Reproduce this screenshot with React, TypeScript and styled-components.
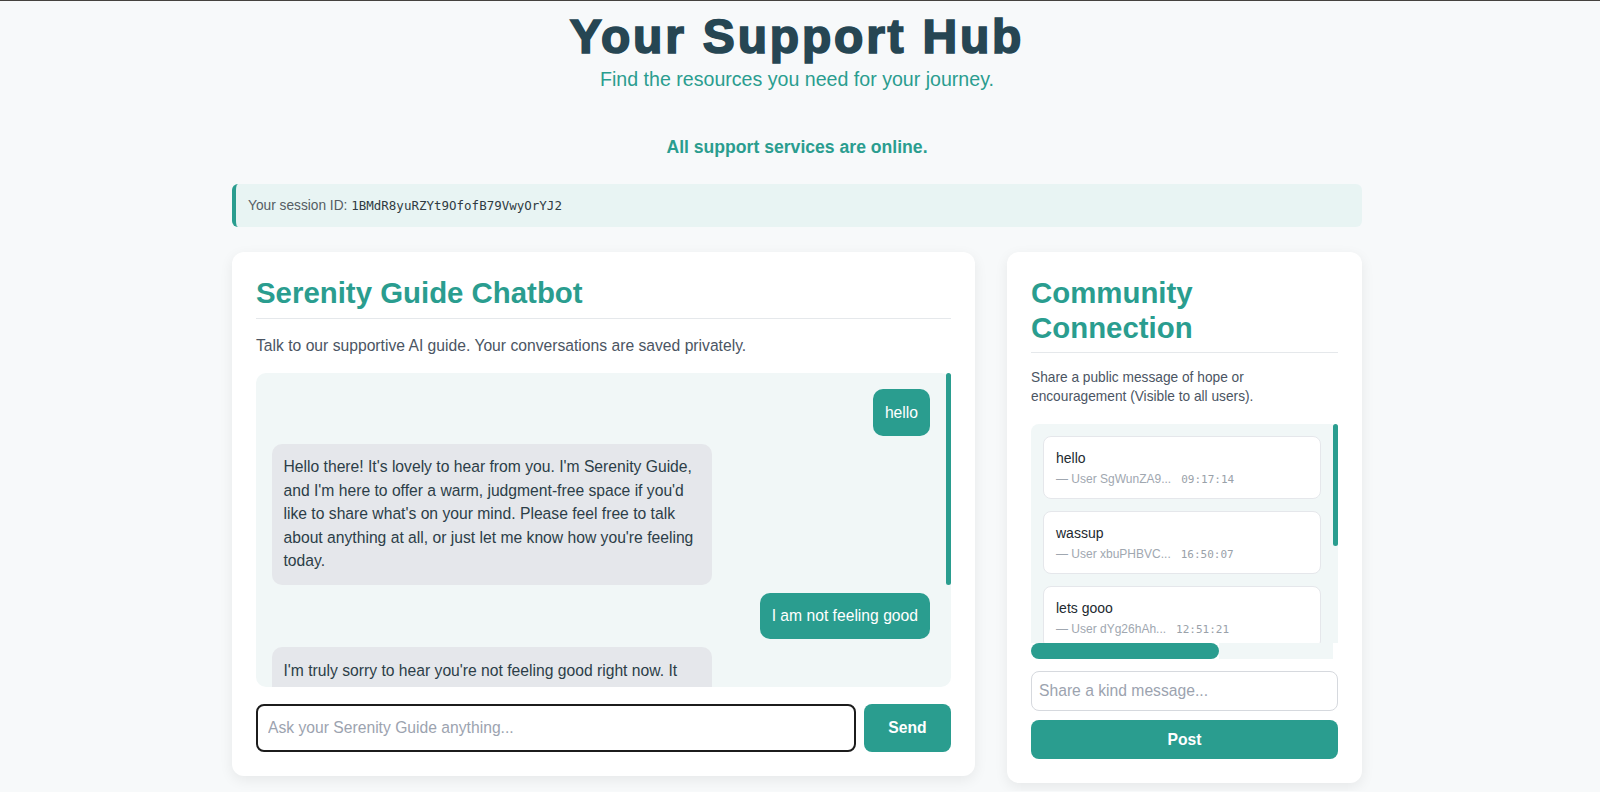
import React from 'react';
import styled, { createGlobalStyle } from 'styled-components';

type ChatMessage = {
  from: 'user' | 'bot';
  text: string;
};

type CommunityPost = {
  text: string;
  user: string;
  time: string;
};

const chatMessages: ChatMessage[] = [
  { from: 'user', text: 'hello' },
  {
    from: 'bot',
    text: "Hello there! It's lovely to hear from you. I'm Serenity Guide, and I'm here to offer a warm, judgment-free space if you'd like to share what's on your mind. Please feel free to talk about anything at all, or just let me know how you're feeling today.",
  },
  { from: 'user', text: 'I am not feeling good' },
  {
    from: 'bot',
    text: "I'm truly sorry to hear you're not feeling good right now. It takes courage to share that, and I'm really glad you reached out. Would you like to tell me a little more about what's been weighing on you? Whether it's something specific or just a general heaviness, I'm here to listen, at whatever pace feels right for you.",
  },
];

const communityPosts: CommunityPost[] = [
  { text: 'hello', user: 'SgWunZA9...', time: '09:17:14' },
  { text: 'wassup', user: 'xbuPHBVC...', time: '16:50:07' },
  { text: 'lets gooo', user: 'dYg26hAh...', time: '12:51:21' },
  { text: 'you are not alone, keep going', user: 'Qm4TfL2x...', time: '18:04:39' },
  { text: 'sending love to everyone here', user: 'Kp8sWvN1...', time: '21:33:02' },
];

const App: React.FC = () => (
  <>
    <GlobalStyle />
    <StyledPage>
      <StyledHeader>
        <StyledTitle>Your Support Hub</StyledTitle>
        <StyledSubtitle>Find the resources you need for your journey.</StyledSubtitle>
      </StyledHeader>

      <StyledStatus>All support services are online.</StyledStatus>

      <StyledSession>
        Your session ID: <StyledSessionId>1BMdR8yuRZYt9OfofB79VwyOrYJ2</StyledSessionId>
      </StyledSession>

      <StyledGrid>
        <StyledCard>
          <StyledCardTitle>Serenity Guide Chatbot</StyledCardTitle>
          <StyledCardText $size={15.68}>
            Talk to our supportive AI guide. Your conversations are saved privately.
          </StyledCardText>
          <StyledScrollFrame>
            <StyledChatWindow>
              {chatMessages.map((message, index) => (
                <StyledBubble key={index} $from={message.from}>
                  {message.text}
                </StyledBubble>
              ))}
            </StyledChatWindow>
            <StyledVThumb $length={212} />
          </StyledScrollFrame>
          <StyledInputRow>
            <StyledChatInput placeholder="Ask your Serenity Guide anything..." />
            <StyledSendButton>Send</StyledSendButton>
          </StyledInputRow>
        </StyledCard>

        <StyledCard>
          <StyledCardTitle>Community Connection</StyledCardTitle>
          <StyledCardText $size={13.72}>
            Share a public message of hope or encouragement (Visible to all users).
          </StyledCardText>
          <StyledScrollFrame>
            <StyledFeed>
              {communityPosts.map((post, index) => (
                <StyledPost key={index}>
                  <StyledPostText>{post.text}</StyledPostText>
                  <StyledPostMeta>
                    — User {post.user}
                    <StyledPostTime>{post.time}</StyledPostTime>
                  </StyledPostMeta>
                </StyledPost>
              ))}
            </StyledFeed>
            <StyledVThumb $length={122} />
            <StyledHScrollbar>
              <StyledHThumb />
              <StyledHTrack />
              <StyledCorner />
            </StyledHScrollbar>
          </StyledScrollFrame>
          <StyledPostInput placeholder="Share a kind message..." />
          <StyledPostButton>Post</StyledPostButton>
        </StyledCard>
      </StyledGrid>
    </StyledPage>
  </>
);

const GlobalStyle = createGlobalStyle`
  html, body {
    margin: 0;
    padding: 0;
  }
  body {
    background: #f7f9fa;
    border-top: 1px solid #45423f;
    font-family: 'Liberation Sans', Arial, sans-serif;
    overflow: hidden;
  }
  input, button {
    font-family: inherit;
  }
`;

const StyledPage = styled.div`
  width: 1130px;
  margin: 0 auto;
  padding: 8px 6px 8px 0;
`;

const StyledHeader = styled.header`
  text-align: center;
`;

const StyledTitle = styled.h1`
  margin: 0 0 4px;
  font-size: 48px;
  line-height: 55px;
  font-weight: 700;
  letter-spacing: 2.8px;
  color: #264653;
  -webkit-text-stroke: 1.7px #264653;
`;

const StyledSubtitle = styled.p`
  margin: 0;
  font-size: 19.6px;
  line-height: 22px;
  color: #2a9d8f;
`;

const StyledStatus = styled.p`
  margin: 47px 0 0;
  text-align: center;
  font-size: 17.6px;
  line-height: 20px;
  font-weight: 700;
  color: #2a9d8f;
`;

const StyledSession = styled.div`
  margin-top: 27px;
  padding: 12px 14px 12px 12px;
  background: #e8f4f3;
  border-left: 4px solid #2a9d8f;
  border-radius: 6px;
  font-size: 13.72px;
  line-height: 19px;
  color: #555d63;
`;

const StyledSessionId = styled.code`
  font-family: 'DejaVu Sans Mono', 'Liberation Mono', monospace;
  font-size: 12.5px;
  color: #2f3b42;
`;

const StyledGrid = styled.main`
  display: grid;
  grid-template-columns: 743px 355px;
  gap: 32px;
  align-items: start;
  margin-top: 25px;
`;

const StyledCard = styled.section`
  background: #ffffff;
  border-radius: 12px;
  padding: 24px;
  box-shadow: 0 4px 14px rgba(0, 0, 0, 0.07);
`;

const StyledCardTitle = styled.h2`
  margin: 0;
  padding-bottom: 7px;
  border-bottom: 1px solid #e5e8eb;
  font-size: 29.4px;
  line-height: 1.18;
  font-weight: 700;
  color: #2a9d8f;
`;

const StyledCardText = styled.p<{ $size: number }>`
  margin: 16px 0 17px;
  font-size: ${({ $size }) => $size}px;
  line-height: 1.38;
  color: #4b5563;
`;

const StyledScrollFrame = styled.div`
  position: relative;
`;

const StyledVThumb = styled.div<{ $length: number }>`
  position: absolute;
  top: 0;
  right: 0;
  width: 5px;
  height: ${({ $length }) => $length}px;
  border-radius: 3px;
  background: #2a9d8f;
`;

const StyledChatWindow = styled.div`
  display: flex;
  flex-direction: column;
  gap: 8px;
  height: 314px;
  box-sizing: border-box;
  padding: 16px 21px 16px 15.5px;
  overflow: hidden;
  background: #f1f7f7;
  border-radius: 10px;
`;

const StyledBubble = styled.div<{ $from: 'user' | 'bot' }>`
  flex-shrink: 0;
  align-self: ${({ $from }) => ($from === 'user' ? 'flex-end' : 'flex-start')};
  max-width: 440px;
  box-sizing: border-box;
  padding: 11.5px 12px;
  border-radius: 10px;
  font-size: 15.68px;
  line-height: 1.5;
  background: ${({ $from }) => ($from === 'user' ? '#2a9d8f' : '#e5e7eb')};
  color: ${({ $from }) => ($from === 'user' ? '#ffffff' : '#2c3e48')};
`;

const StyledInputRow = styled.div`
  display: flex;
  gap: 8px;
  margin-top: 17px;
`;

const StyledChatInput = styled.input`
  flex: 1;
  height: 48px;
  box-sizing: border-box;
  padding: 0 10px;
  border: 2px solid #1c1c1c;
  border-radius: 8px;
  font-size: 15.68px;
  color: #264653;
  outline: none;

  &::placeholder {
    color: #9ca3af;
  }
`;

const StyledSendButton = styled.button`
  width: 87px;
  height: 48px;
  border: none;
  border-radius: 8px;
  background: #2a9d8f;
  color: #ffffff;
  font-size: 15.68px;
  font-weight: 700;
`;

const StyledFeed = styled.div`
  height: 219px;
  box-sizing: border-box;
  padding: 12px 17px 12px 12px;
  overflow: hidden;
  background: #f1f7f7;
  border-radius: 8px 8px 0 0;
`;

const StyledHScrollbar = styled.div`
  display: flex;
  height: 16px;
`;

const StyledHThumb = styled.div`
  width: 188px;
  border-radius: 8px;
  background: #2a9d8f;
`;

const StyledHTrack = styled.div`
  flex: 1;
  background: #f1f7f7;
`;

const StyledCorner = styled.div`
  width: 5px;
  background: #ffffff;
`;

const StyledPost = styled.div`
  background: #ffffff;
  border: 1px solid #e5e7eb;
  border-radius: 8px;
  padding: 11px 12px 10px;

  & + & {
    margin-top: 12px;
  }
`;

const StyledPostText = styled.div`
  font-size: 14px;
  line-height: 20px;
  color: #222a30;
  white-space: nowrap;
`;

const StyledPostMeta = styled.div`
  margin-top: 3px;
  font-size: 12px;
  line-height: 16px;
  color: #a0a7b0;
  white-space: nowrap;
`;

const StyledPostTime = styled.span`
  margin-left: 10px;
  font-family: 'DejaVu Sans Mono', 'Liberation Mono', monospace;
  font-size: 11px;
  color: #9aa1a9;
`;

const StyledPostInput = styled.input`
  display: block;
  width: 100%;
  height: 40px;
  box-sizing: border-box;
  margin-top: 12px;
  padding: 0 7px;
  border: 1px solid #d6d9de;
  border-radius: 8px;
  font-size: 15.68px;
  outline: none;

  &::placeholder {
    color: #9ca3af;
  }
`;

const StyledPostButton = styled.button`
  display: block;
  width: 100%;
  height: 39px;
  margin-top: 9px;
  border: none;
  border-radius: 8px;
  background: #2a9d8f;
  color: #ffffff;
  font-size: 15.68px;
  font-weight: 700;
`;

export default App;
